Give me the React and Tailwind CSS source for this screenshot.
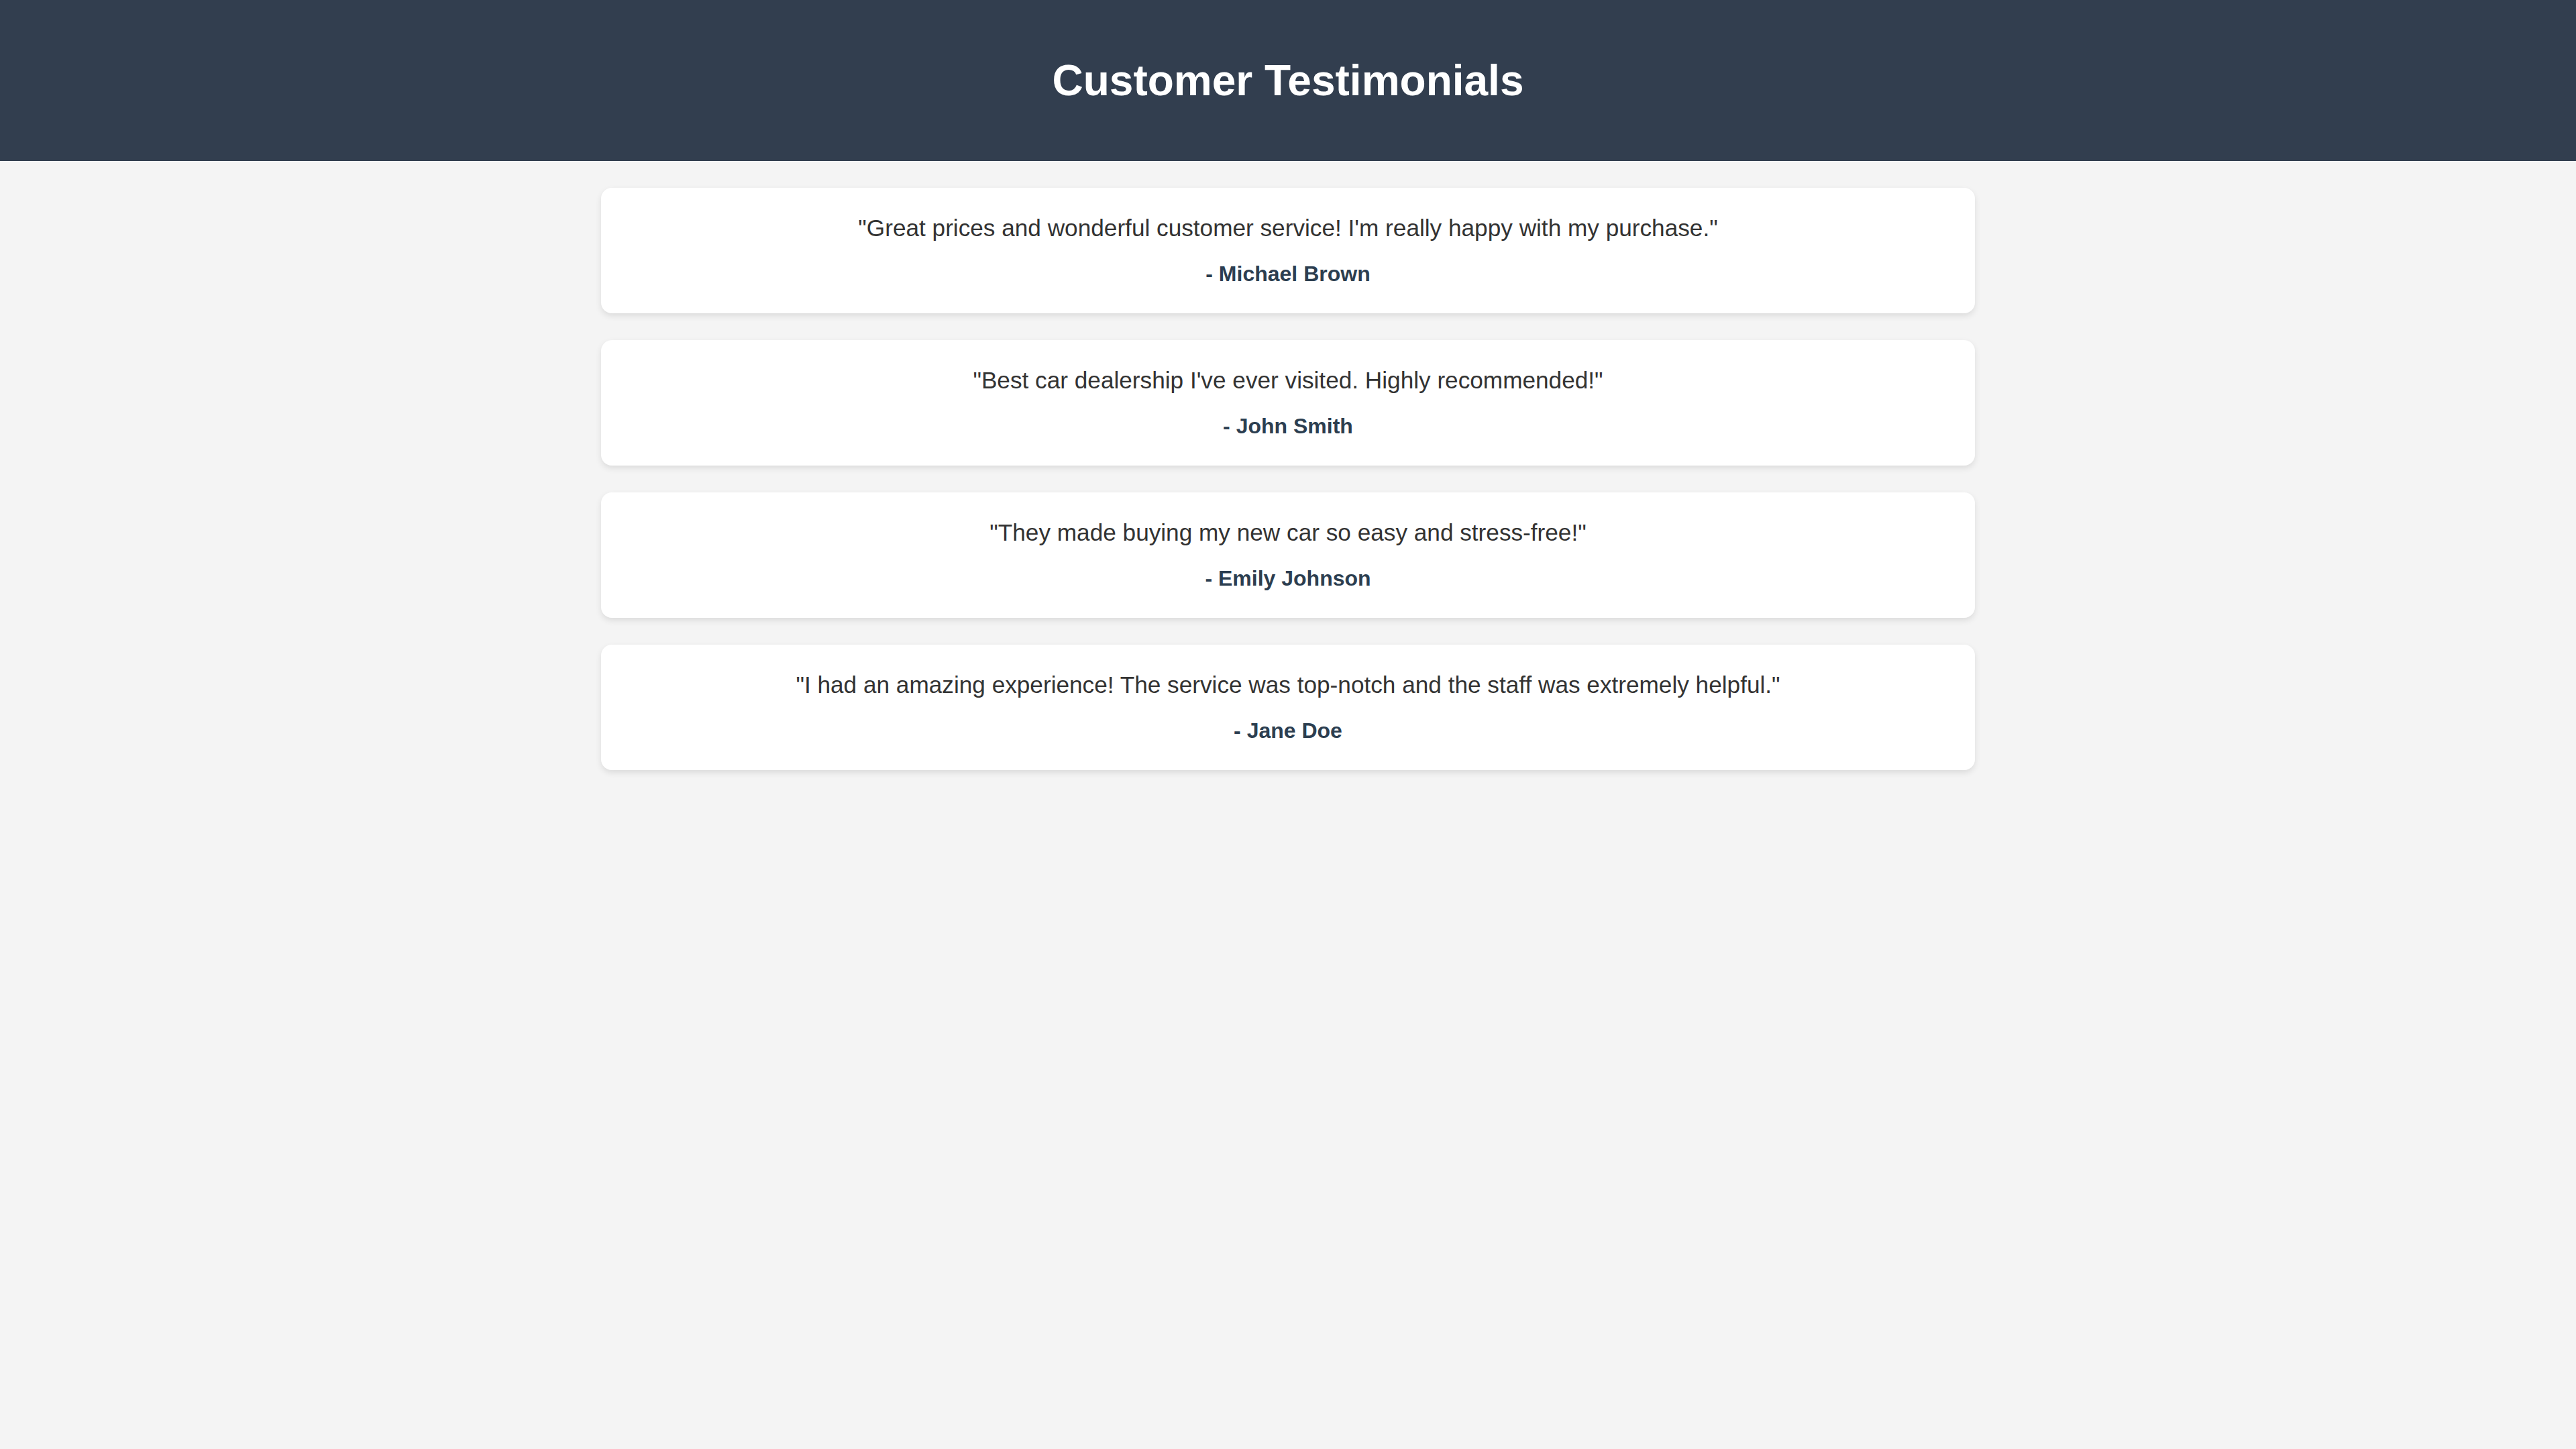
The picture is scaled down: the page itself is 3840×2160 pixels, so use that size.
import React from "react";

const testimonials = [
  { quote: "\"Great prices and wonderful customer service! I'm really happy with my purchase.\"", author: "- Michael Brown" },
  { quote: "\"Best car dealership I've ever visited. Highly recommended!\"", author: "- John Smith" },
  { quote: "\"They made buying my new car so easy and stress-free!\"", author: "- Emily Johnson" },
  { quote: "\"I had an amazing experience! The service was top-notch and the staff was extremely helpful.\"", author: "- Jane Doe" },
];

export default function App() {
  return (
    <div className="min-h-screen bg-[#f4f4f4] font-['Liberation_Sans',Arial,sans-serif]">
      <header className="h-[240px] bg-[#323e4f] pt-[83px] text-center">
        <h1 className="text-[64px] font-bold leading-[74px] text-white">Customer Testimonials</h1>
      </header>
      <main className="mx-auto flex w-[2048px] flex-col gap-[40px] pt-[40px]">
        {testimonials.map((t) => (
          <div
            key={t.author}
            className="rounded-[16px] bg-white pt-[40px] pb-[40px] text-center shadow-[0_4px_10px_rgba(0,0,0,0.1)]"
          >
            <p className="text-[35.2px] leading-[40px] text-[#333333]">{t.quote}</p>
            <p className="mt-[30px] text-[32px] font-bold leading-[37px] text-[#2c3e50]">{t.author}</p>
          </div>
        ))}
      </main>
    </div>
  );
}
